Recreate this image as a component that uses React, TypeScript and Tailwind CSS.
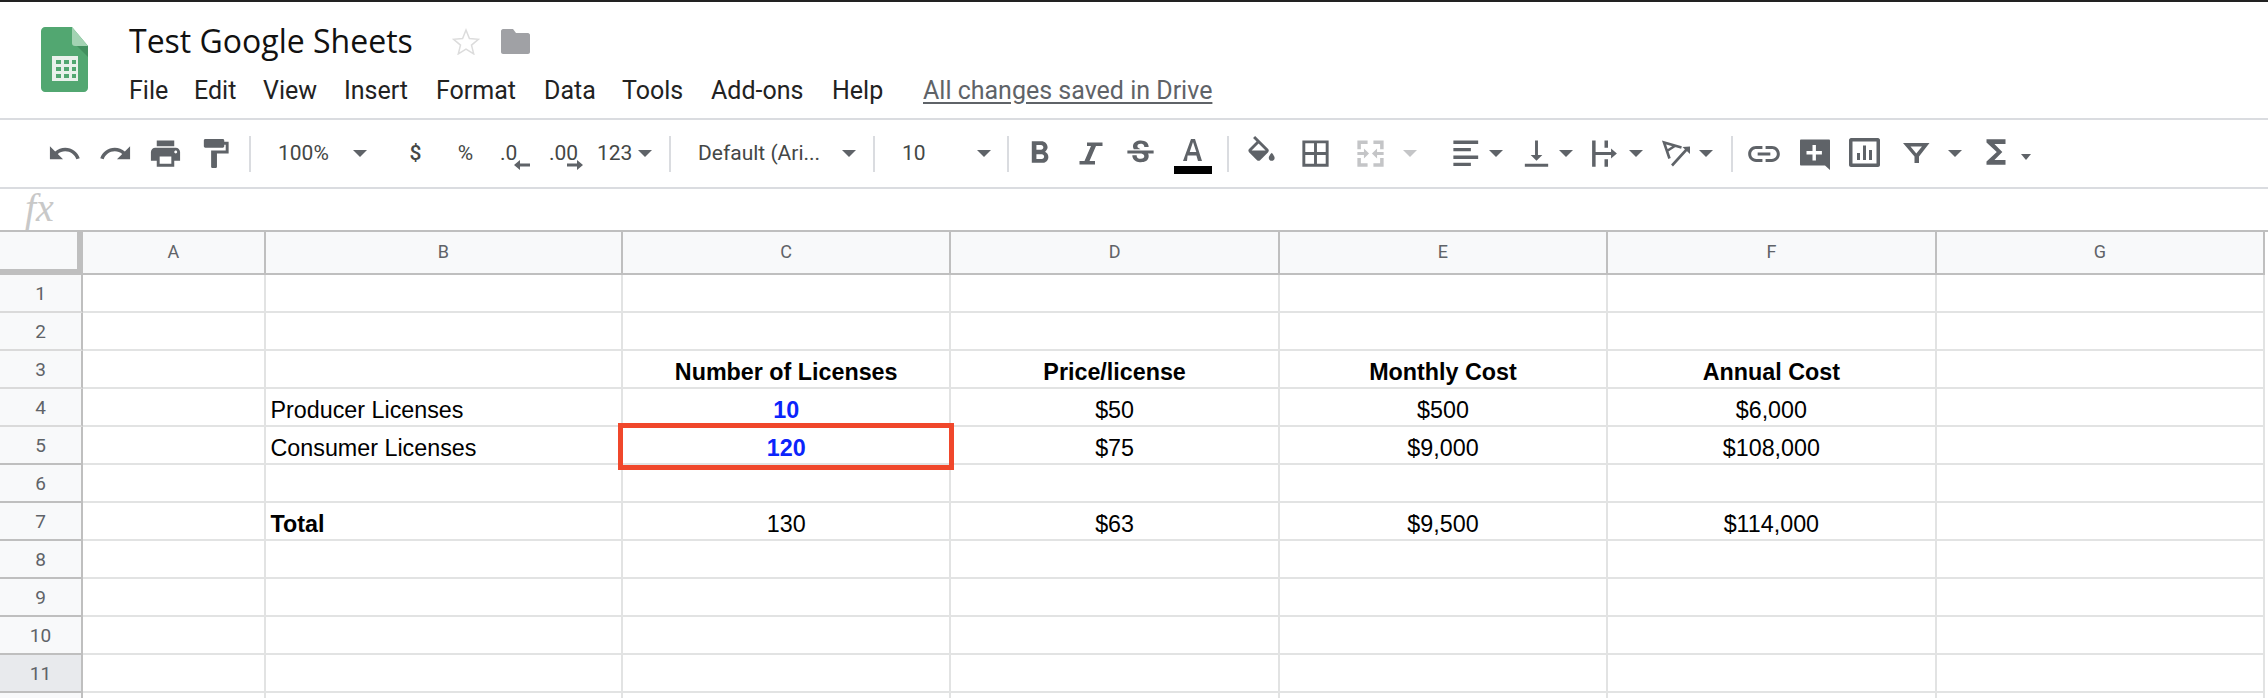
import React from "react";

const ICON = {
  undo: "M12.5 8c-2.65 0-5.05.99-6.9 2.6L2 7v9h9l-3.62-3.62c1.39-1.16 3.16-1.88 5.12-1.88 3.54 0 6.55 2.31 7.6 5.5l2.37-.78C21.08 11.03 17.15 8 12.5 8z",
  redo: "M18.4 10.6C16.55 8.99 14.15 8 11.5 8c-4.65 0-8.58 3.03-9.96 7.22L3.9 16c1.05-3.19 4.05-5.5 7.6-5.5 1.95 0 3.73.72 5.12 1.88L13 16h9V7l-3.6 3.6z",
  print: "M19 8H5c-1.66 0-3 1.34-3 3v6h4v4h12v-4h4v-6c0-1.66-1.34-3-3-3zm-3 11H8v-5h8v5zm3-7c-.55 0-1-.45-1-1s.45-1 1-1 1 .45 1 1-.45 1-1 1zm-1-9H6v4h12V3z",
  paint: "M18 4V3c0-.55-.45-1-1-1H5c-.55 0-1 .45-1 1v4c0 .55.45 1 1 1h12c.55 0 1-.45 1-1V6h1v4H9v11c0 .55.45 1 1 1h2c.55 0 1-.45 1-1v-9h8V4h-3z",
  bold: "M15.6 10.79c.97-.67 1.65-1.77 1.65-2.79 0-2.26-1.75-4-4-4H7v14h7.04c2.09 0 3.71-1.7 3.71-3.79 0-1.52-.86-2.82-2.15-3.42zM10 6.5h3c.83 0 1.5.67 1.5 1.5s-.67 1.5-1.5 1.5h-3v-3zm3.5 9H10v-3h3.5c.83 0 1.5.67 1.5 1.5s-.67 1.5-1.5 1.5z",
  strike: "M6.85 7.08C6.85 4.37 9.45 3 12.24 3c1.64 0 3 .49 3.9 1.28.77.65 1.46 1.73 1.46 3.24h-3.01c0-.31-.05-.59-.15-.85-.29-.86-1.2-1.28-2.25-1.28-1.86 0-2.34 1.02-2.34 1.7 0 .48.25.88.74 1.21.38.25.77.48 1.41.7H7.39c-.21-.34-.54-.89-.54-1.92zM21 12v-2H3v2h9.62c1.15.45 1.96.75 1.96 1.97 0 1-.81 1.67-2.28 1.67-1.54 0-2.93-.54-2.93-2.51H6.4c0 .55.08 1.13.24 1.58.81 2.29 3.29 3.3 5.67 3.3 2.27 0 5.3-.89 5.3-4.05 0-.3-.01-1.16-.48-1.94H21V12z",
  fill: "M16.56 8.94L7.62 0 6.21 1.41l2.38 2.38-5.15 5.15c-.59.59-.59 1.54 0 2.12l5.5 5.5c.29.29.68.44 1.06.44s.77-.15 1.06-.44l5.5-5.5c.59-.58.59-1.53 0-2.12zM5.21 10L10 5.21 14.79 10H5.21zM19 11.5s-2 2.17-2 3.5c0 1.1.9 2 2 2s2-.9 2-2c0-1.33-2-3.5-2-3.5z",
  borders: "M3 3v18h18V3H3zm8 16H5v-6h6v6zm0-8H5V5h6v6zm8 8h-6v-6h6v6zm0-8h-6V5h6v6z",
  merge: "M3 3h7v2.4H5.4V9H3zM14 3h7v6h-2.4V5.4H14zM3 15h2.4v3.6H10V21H3zM18.6 15H21v6h-7v-2.4h4.6zM3 11h4.5V8.5L11 12l-3.5 3.5V13H3zM21 11h-4.5V8.5L13 12l3.5 3.5V13H21z",
  align: "M3 3.1h17v2.3H3zM3 8.2h12v2.3H3zM3 13.4h17v2.3H3zM3 18.3h12v2.3H3z",
  valign: "M16 13h-3V3h-2v10H8l4 4 4-4zM4 19v2h16v-2H4z",
  wrap: "M3.5 3h2.4v18H3.5zM12 3h2.4v5H12zM12 16h2.4v5H12zM5.9 10.9h10.6V8.5l4 3.5-4 3.5v-2.4H5.9z",
  link: "M3.9 12c0-1.71 1.39-3.1 3.1-3.1h4V7H7c-2.76 0-5 2.24-5 5s2.24 5 5 5h4v-1.9H7c-1.71 0-3.1-1.39-3.1-3.1zM8 13h8v-2H8v2zm9-6h-4v1.9h4c1.71 0 3.1 1.39 3.1 3.1s-1.39 3.1-3.1 3.1h-4V17h4c2.76 0 5-2.24 5-5s-2.24-5-5-5z",
  sigma: "M18 4H6v2l6.5 6L6 18v2h12v-3h-7l5-5-5-5h7z",
};

const Icon = ({ d, className }: { d: string; className: string }) => (
  <svg viewBox="0 0 24 24" className={"shrink-0 fill-[#5f6368] " + className}>
    <path d={d} />
  </svg>
);

const Arrow = ({ className }: { className: string }) => (
  <svg viewBox="0 0 14 7" className={"h-[7px] w-[14px] shrink-0 fill-[#5f6368] " + className}>
    <path d="M0 0h14L7 7z" />
  </svg>
);

const Sep = ({ className }: { className: string }) => (
  <div className={"h-[36px] w-[2px] shrink-0 bg-[#dadce0] " + className} />
);

const Logo = () => (
  <svg viewBox="0 0 47 65" className="h-[65px] w-[47px] shrink-0">
    <path d="M4 0h27l16 19v42c0 2-2 4-4 4H4c-2 0-4-2-4-4V4c0-2 2-4 4-4z" fill="#52a771" />
    <path d="M31 14l16 16V19z" fill="#42905f" />
    <path d="M31 0l16 19H34c-2 0-3-1-3-3z" fill="#a3d3b3" />
    <path d="M11 29h26v25H11z" fill="#e9f1eb" />
    <path d="M15 33h5v4h-5zM23 33h5v4h-5zM31 33h4v4h-4zM15 40h5v4h-5zM23 40h5v4h-5zM31 40h4v4h-4zM15 47h5v4h-5zM23 47h5v4h-5zM31 47h4v4h-4z" fill="#52a771" />
  </svg>
);

const COLS = ["A", "B", "C", "D", "E", "F", "G"];
const COL_W = ["w-[182.5px]", "w-[357.5px]", "w-[328.4px]", "w-[328.4px]", "w-[328.4px]", "w-[328.4px]", "w-[328.4px]"];

type Cell = { t: string; bold?: boolean; blue?: boolean };

const DATA: Record<number, Record<number, Cell>> = {
  3: {
    2: { t: "Number of Licenses", bold: true },
    3: { t: "Price/license", bold: true },
    4: { t: "Monthly Cost", bold: true },
    5: { t: "Annual Cost", bold: true },
  },
  4: {
    1: { t: "Producer Licenses" },
    2: { t: "10", bold: true, blue: true },
    3: { t: "$50" },
    4: { t: "$500" },
    5: { t: "$6,000" },
  },
  5: {
    1: { t: "Consumer Licenses" },
    2: { t: "120", bold: true, blue: true },
    3: { t: "$75" },
    4: { t: "$9,000" },
    5: { t: "$108,000" },
  },
  7: {
    1: { t: "Total", bold: true },
    2: { t: "130" },
    3: { t: "$63" },
    4: { t: "$9,500" },
    5: { t: "$114,000" },
  },
};

const ROWS = [1, 2, 3, 4, 5, 6, 7, 8, 9, 10, 11, 12];

export default function App() {
  return (
    <div className="h-[698px] w-[2268px] overflow-hidden bg-white font-['Roboto',sans-serif] text-[#444746]">
      <div className="h-[2px] bg-[#222222]" />

      {/* title + menus */}
      <div className="flex h-[116px] border-b-2 border-[#dadce0] box-content">
        <div className="ml-[41px] mt-[25px]">
          <Logo />
        </div>
        <div className="ml-[41px] flex flex-col">
          <div className="mt-[17px] flex h-[44px] items-center">
            <span className="text-[32px] text-[#111111] font-['Open_Sans',sans-serif] leading-none">Test Google Sheets</span>
            <svg viewBox="0 0 28 27" className="ml-[39px] h-[27px] w-[28px] shrink-0 fill-none stroke-[#dcdcdc] stroke-[1.5]">
              <path d="M14 2l3.4 8.6 9 .7-6.9 5.8 2.2 8.8-7.7-4.8-7.7 4.8 2.2-8.8-6.9-5.8 9-.7z" />
            </svg>
            <svg viewBox="0 0 29 25" className="ml-[21px] h-[25px] w-[29px] shrink-0 fill-[#a0a1a5]">
              <path d="M2 0h10l3 4h12c1 0 2 1 2 2v17c0 1-1 2-2 2H2c-1 0-2-1-2-2V2c0-1 1-2 2-2z" />
            </svg>
          </div>
          <div className="mt-[14px] flex h-[26px] items-center whitespace-nowrap text-[25px] leading-none text-[#222222]">
            <span className="w-[65px]">File</span>
            <span className="w-[69px]">Edit</span>
            <span className="w-[81px]">View</span>
            <span className="w-[92px]">Insert</span>
            <span className="w-[108px]">Format</span>
            <span className="w-[78px]">Data</span>
            <span className="w-[89px]">Tools</span>
            <span className="w-[121px]">Add-ons</span>
            <span className="w-[91px]">Help</span>
            <span className="text-[#5f6368] underline underline-offset-[3px]">All changes saved in Drive</span>
          </div>
        </div>
      </div>

      {/* toolbar */}
      <div className="flex h-[67px] items-center border-b-2 border-[#dadce0] box-content text-[21px] leading-none">
        <Icon d={ICON.undo} className="ml-[47px] h-[35px] w-[35px]" />
        <Icon d={ICON.redo} className="ml-[16px] h-[35px] w-[35px]" />
        <Icon d={ICON.print} className="ml-[15px] h-[35px] w-[35px]" />
        <Icon d={ICON.paint} className="ml-[15px] h-[35px] w-[35px]" />
        <Sep className="ml-[16px]" />
        <span className="ml-[27px] w-[51px] shrink-0">100%</span>
        <Arrow className="ml-[24px]" />
        <span className="ml-[36.5px] w-[24px] shrink-0 text-center font-medium">$</span>
        <span className="ml-[26px] w-[24px] shrink-0 text-center">%</span>
        <span className="relative ml-[22.5px] w-[30px] shrink-0">
          .0
          <svg viewBox="0 0 16 10" className="absolute left-[14px] top-[17px] h-[10px] w-[16px] fill-[#5f6368]">
            <path d="M16 3.5H6V0L0 5l6 5V6.5h10z" />
          </svg>
        </span>
        <span className="relative ml-[19px] w-[34px] shrink-0">
          .00
          <svg viewBox="0 0 16 10" className="absolute left-[18px] top-[17px] h-[10px] w-[16px] fill-[#5f6368]">
            <path d="M0 3.5h10V0l6 5-6 5V6.5H0z" />
          </svg>
        </span>
        <span className="ml-[14px] w-[36px] shrink-0">123</span>
        <Arrow className="ml-[5px]" />
        <Sep className="ml-[17px]" />
        <span className="ml-[27px] w-[125px] shrink-0 whitespace-nowrap">Default (Ari...</span>
        <Arrow className="ml-[19px]" />
        <Sep className="ml-[17px]" />
        <span className="ml-[27px] w-[23px] shrink-0">10</span>
        <Arrow className="ml-[52px]" />
        <Sep className="ml-[16px]" />
        <Icon d={ICON.bold} className="ml-[11.5px] h-[37px] w-[37px]" />
        <svg viewBox="0 0 38 38" className="ml-[14px] h-[38px] w-[38px] shrink-0 fill-[#5f6368]">
          <path d="M15 7.5h15.5V11H24l-6.5 15H23v3.5H7.5V26h5l6.5-15h-4z" />
        </svg>
        <Icon d={ICON.strike} className="ml-[13px] h-[35px] w-[35px]" />
        <div className="relative ml-[16.5px] h-[38px] w-[38px] shrink-0">
          <svg viewBox="0 0 38 38" className="h-[38px] w-[38px] fill-[#5f6368]">
            <path d="M17 4h4l7 22h-4l-1.6-5.5h-8.8L13 26H9zM15.7 17h6.6L19 7z" fillRule="evenodd" />
          </svg>
          <div className="absolute left-0 top-[31.5px] h-[8px] w-[38px] bg-black" />
        </div>
        <Sep className="ml-[15px]" />
        <Icon d={ICON.fill} className="ml-[14.7px] h-[35px] w-[35px]" />
        <Icon d={ICON.borders} className="ml-[19px] h-[35px] w-[35px]" />
        <svg viewBox="0 0 24 24" className="ml-[20.3px] h-[35px] w-[35px] shrink-0 fill-[#c4c5c7]">
          <path d={ICON.merge} />
        </svg>
        <svg viewBox="0 0 14 7" className="ml-[15px] h-[7px] w-[14px] shrink-0 fill-[#c4c5c7]">
          <path d="M0 0h14L7 7z" />
        </svg>
        <Icon d={ICON.align} className="ml-[31.7px] h-[35px] w-[35px]" />
        <Arrow className="ml-[5.3px]" />
        <Icon d={ICON.valign} className="ml-[16px] h-[35px] w-[35px]" />
        <Arrow className="ml-[5px]" />
        <Icon d={ICON.wrap} className="ml-[14px] h-[35px] w-[35px]" />
        <Arrow className="ml-[7px]" />
        <svg viewBox="0 0 35 35" className="ml-[16px] h-[35px] w-[35px] shrink-0">
          <path d="M10.5 22.5L5 6.5l17.5 5M8 15l8.5-5.5M13 29.5L28.5 12.5" fill="none" stroke="#5f6368" strokeWidth="2.6" />
          <path d="M31 10.5V18l-7.5-7z" fill="#5f6368" />
        </svg>
        <Arrow className="ml-[5px]" />
        <Sep className="ml-[18px]" />
        <Icon d={ICON.link} className="ml-[12.5px] h-[38px] w-[38px]" />
        <svg viewBox="0 0 35 35" className="ml-[13.5px] h-[35px] w-[35px] shrink-0">
          <path d="M4 3.5h28c.5 0 1 .5 1 1V34l-5-4.5H4c-.5 0-1-.5-1-1v-24c0-.5.5-1 1-1z" fill="#5f6368" />
          <path d="M15.5 9h3.4v6h6v3.4h-6v6h-3.4v-6h-6V15h6z" fill="#ffffff" />
        </svg>
        <svg viewBox="0 0 35 35" className="ml-[15.5px] h-[35px] w-[35px] shrink-0 fill-[#5f6368]">
          <path d="M4 2h27c1 0 2 1 2 2v25c0 1-1 2-2 2H4c-1 0-2-1-2-2V4c0-1 1-2 2-2zM5.5 5.5v22h24v-22z" fillRule="evenodd" />
          <path d="M10 17h3v7h-3zM16 9.5h3V24h-3zM22 14h3v10h-3z" />
        </svg>
        <svg viewBox="0 0 35 35" className="ml-[17px] h-[35px] w-[35px] shrink-0 fill-[#5f6368]">
          <path d="M4 7h26.5L20 20.5V27h-4.5v-6.5zM11.5 10.5l5.8 7 5.7-7z" fillRule="evenodd" />
        </svg>
        <Arrow className="ml-[13.5px]" />
        <Icon d={ICON.sigma} className="mb-[4px] ml-[15.5px] h-[38px] w-[38px]" />
        <svg viewBox="0 0 10 6" className="ml-[5.5px] mt-[6px] h-[6px] w-[10px] shrink-0 fill-[#5f6368]">
          <path d="M0 0h10L5 6z" />
        </svg>
      </div>

      {/* formula bar */}
      <div className="flex h-[41px] items-center pb-[4px] pl-[25px] font-['Liberation_Serif',serif] text-[40px] italic leading-none text-[#c8c8c8]">
        <span>fx</span>
      </div>

      {/* grid */}
      <div className="relative border-t-2 border-[#bfbfbf] font-['Liberation_Sans',sans-serif] text-[23.3px] leading-[26px] text-black">
        <div className="flex h-[42.7px]">
          <div className="h-full w-[83px] shrink-0 border-b-[6px] border-r-[6px] border-[#bfbfbf] bg-[#f8f9fa]" />
          {COLS.map((c, i) => (
            <div
              key={c}
              className={
                "flex h-full shrink-0 items-center justify-center border-b-2 border-r-2 border-[#bfbfbf] bg-[#f8f9fa] font-['Roboto',sans-serif] text-[18px] text-[#5f6368] " +
                COL_W[i]
              }
            >
              {c}
            </div>
          ))}
        </div>
        {ROWS.map((r) => (
          <div key={r} className="flex h-[38px]">
            <div
              className={
                "flex h-full w-[83px] shrink-0 items-center justify-center border-b-2 border-r-2 border-r-[#bfbfbf] pt-[2px] font-['Roboto',sans-serif] text-[19px] text-[#5f6368] " +
                (r === 11 ? "bg-[#e8eaed] " : "bg-[#f8f9fa] ") +
                (r < 5 ? "border-b-[#dadada]" : "border-b-[#bfbfbf]")
              }
            >
              {r < 12 ? r : null}
            </div>
            {COLS.map((c, i) => {
              const cell = DATA[r]?.[i];
              return (
                <div
                  key={c}
                  className={
                    "flex h-full shrink-0 items-end whitespace-nowrap border-b-2 border-r-2 border-[#e2e3e3] pb-[2px] " +
                    (i === 1 ? "justify-start pl-[5px] " : "justify-center ") +
                    (cell?.bold ? "font-bold " : "") +
                    (cell?.blue ? "text-[#0b24fb] " : "") +
                    COL_W[i]
                  }
                >
                  {cell?.t}
                </div>
              );
            })}
          </div>
        ))}
        {/* red annotation box */}
        <div className="absolute left-[618px] top-[191px] h-[47px] w-[336px] border-[5px] border-[#f0472b]" />
      </div>
    </div>
  );
}
